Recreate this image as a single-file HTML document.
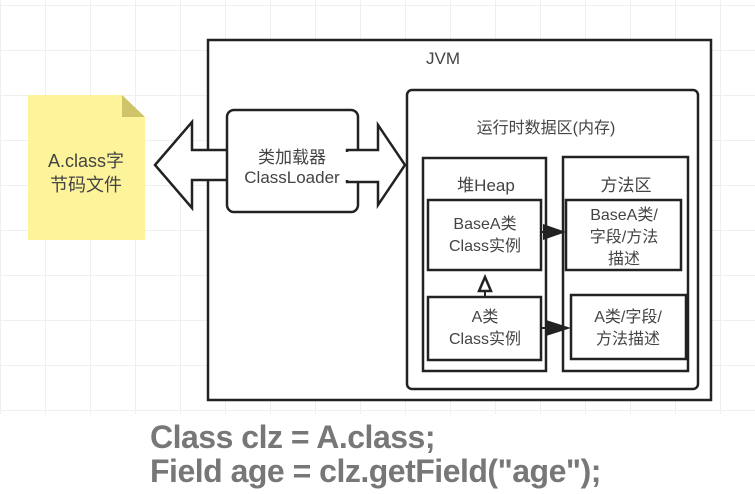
<!DOCTYPE html>
<html><head><meta charset="utf-8"><style>
body{margin:0;width:755px;height:494px;overflow:hidden;background:#fff;
background-image:linear-gradient(#efefef 1px,transparent 1px),linear-gradient(90deg,#efefef 1px,transparent 1px);
background-size:45px 45px;background-position:0 5px;}
svg text{font-family:"Liberation Sans","Noto Sans CJK SC",sans-serif;fill:#444;}
.code{position:absolute;left:150px;font-family:"Liberation Sans Narrow","Liberation Sans",sans-serif;font-weight:bold;font-size:32px;color:#777;letter-spacing:-0.5px;}
</style></head><body>
<div style="position:absolute;left:0;top:414px;width:755px;height:80px;background:#fff"></div>
<svg width="755" height="494" style="position:absolute;left:0;top:0">
<g fill="none" stroke="#222" stroke-width="2.5">
<rect x="208" y="40" width="503" height="360" fill="#fff"/>
<rect x="407" y="90" width="291" height="299" rx="5" fill="#fff"/>
<rect x="423" y="158" width="123" height="213"/>
<rect x="563" y="157" width="125" height="214"/>
<rect x="428" y="200" width="113" height="70"/>
<rect x="428" y="297" width="113" height="63"/>
<rect x="566" y="200" width="115" height="70"/>
<rect x="571" y="295" width="115" height="64"/>
</g>
<polygon points="28,95 122,95 145,117 145,240 28,240" fill="#fdf39a"/>
<polygon points="122,95 145,117 122,117" fill="#cfc46a"/>
<polygon points="155,165 192,122 192,150 236,150 236,180 192,180 192,208" fill="#fff" stroke="#222" stroke-width="2.5"/>
<rect x="227" y="110" width="131" height="102" rx="7" fill="#fff" stroke="#222" stroke-width="2.5"/>
<polygon points="347,150 378,150 378,125 405,165 378,205 378,182 347,182" fill="#fff" stroke="#222" stroke-width="2.5"/>
<rect x="343" y="152" width="13" height="28" fill="#fff"/>
<line x1="541" y1="232" x2="552" y2="232" stroke="#222" stroke-width="2"/>
<polygon points="543,224 566,232 543,240" fill="#222"/>
<line x1="541" y1="328" x2="555" y2="328" stroke="#222" stroke-width="2"/>
<polygon points="546,320 571,328 546,336" fill="#222"/>
<polygon points="485,277 491,291 479,291" fill="#fff" stroke="#222" stroke-width="2.5"/>
<line x1="485" y1="291" x2="485" y2="297" stroke="#222" stroke-width="2"/>
<g font-size="16" text-anchor="middle">
<text x="443" y="64" font-size="17">JVM</text>
<text x="86" y="167" font-size="18">A.class字</text>
<text x="86" y="191" font-size="18">节码文件</text>
<text x="292" y="163" font-size="17">类加载器</text>
<text x="292" y="183" font-size="17">ClassLoader</text>
<text x="546" y="133">运行时数据区(内存)</text>
<text x="486" y="191" font-size="17">堆Heap</text>
<text x="626" y="191" font-size="17">方法区</text>
<text x="485" y="229">BaseA类</text>
<text x="485" y="251">Class实例</text>
<text x="485" y="322">A类</text>
<text x="485" y="344">Class实例</text>
<text x="624" y="220">BaseA类/</text>
<text x="624" y="242">字段/方法</text>
<text x="624" y="264">描述</text>
<text x="628" y="322">A类/字段/</text>
<text x="628" y="344">方法描述</text>
</g>
</svg>
<div class="code" style="top:419px">Class clz = A.class;</div>
<div class="code" style="top:453px">Field age = clz.getField("age");</div>
</body></html>
